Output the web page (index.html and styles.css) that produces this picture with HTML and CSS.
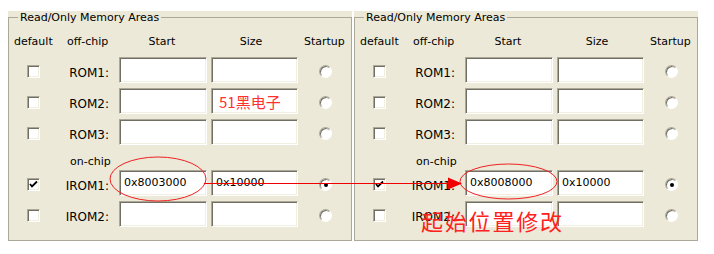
FILE: index.html
```html
<!DOCTYPE html>
<html>
<head>
<meta charset="utf-8">
<link rel="stylesheet" href="styles.css">
</head>
<body>
<div class="wrap">
  <div class="panel">
    <fieldset class="group">
      <legend>Read/Only Memory Areas</legend>
      <div class="grid">
        <div class="hd hd-default">default</div>
        <div class="hd hd-off">off-chip</div>
        <div class="hd hd-start">Start</div>
        <div class="hd hd-size">Size</div>
        <div class="hd hd-startup">Startup</div>

        <span class="chk"></span><div class="lbl">ROM1:</div><div class="field"></div><div class="field"></div><span class="radio"></span>
        <span class="chk"></span><div class="lbl">ROM2:</div><div class="field"></div><div class="field wm">51黑电子</div><span class="radio"></span>
        <span class="chk"></span><div class="lbl">ROM3:</div><div class="field"></div><div class="field"></div><span class="radio"></span>

        <div class="onchip">on-chip</div>

        <span class="chk on"><svg width="9" height="9" viewBox="0 0 9 9"><path d="M1 4 L3 6.5 L8 1.5" fill="none" stroke="#000" stroke-width="1.8"/></svg></span><div class="lbl">IROM1:</div><div class="field">0x8003000</div><div class="field">0x10000</div><span class="radio sel"></span>
        <span class="chk"></span><div class="lbl">IROM2:</div><div class="field"></div><div class="field"></div><span class="radio"></span>
      </div>
    </fieldset>
  </div>
  <div class="panel">
    <fieldset class="group">
      <legend>Read/Only Memory Areas</legend>
      <div class="grid">
        <div class="hd hd-default">default</div>
        <div class="hd hd-off">off-chip</div>
        <div class="hd hd-start">Start</div>
        <div class="hd hd-size">Size</div>
        <div class="hd hd-startup">Startup</div>

        <span class="chk"></span><div class="lbl">ROM1:</div><div class="field"></div><div class="field"></div><span class="radio"></span>
        <span class="chk"></span><div class="lbl">ROM2:</div><div class="field"></div><div class="field"></div><span class="radio"></span>
        <span class="chk"></span><div class="lbl">ROM3:</div><div class="field"></div><div class="field"></div><span class="radio"></span>

        <div class="onchip">on-chip</div>

        <span class="chk on"><svg width="9" height="9" viewBox="0 0 9 9"><path d="M1 4 L3 6.5 L8 1.5" fill="none" stroke="#000" stroke-width="1.8"/></svg></span><div class="lbl">IROM1:</div><div class="field">0x8008000</div><div class="field">0x10000</div><span class="radio sel"></span>
        <span class="chk"></span><div class="lbl">IROM2:</div><div class="field"></div><div class="field"></div><span class="radio"></span>
      </div>
    </fieldset>
  </div>
</div>

<svg class="marks" width="714" height="254" viewBox="0 0 714 254">
  <ellipse cx="158" cy="179" rx="48" ry="22" fill="none" stroke="#f02020" stroke-width="1"/>
  <ellipse cx="508.5" cy="181.5" rx="48.5" ry="17.5" fill="none" stroke="#f02020" stroke-width="1"/>
  <line x1="204" y1="183.5" x2="450" y2="183.5" stroke="#f00000" stroke-width="1"/>
  <polygon points="448,177.5 462,183.5 448,189.5" fill="#f00000"/>
</svg>
<div class="note">起始位置修改</div>
</body>
</html>
```
FILE: styles.css
```css
html, body {
  margin: 0;
  padding: 0;
  background: #ffffff;
}
body {
  font-family: "DejaVu Sans", "Liberation Sans", sans-serif;
  font-size: 11px;
  color: #000;
  position: relative;
  width: 714px;
  height: 254px;
  overflow: hidden;
}
.wrap {
  display: flex;
  gap: 2px;
  padding: 11px 0 0 8px;
}
.panel {
  width: 344px;
  height: 230px;
  background: #ece9d8;
}
.group {
  margin: 0;
  padding: 0;
  height: 100%;
  box-sizing: border-box;
  border: 1px solid #aca899;
  min-width: 0;
}
.group legend {
  margin-left: 9px;
  padding: 0 2px;
  line-height: 13px;
  font-size: 11px;
}
.grid {
  display: grid;
  grid-template-columns: 46px 56px 88px 87px 1fr;
  grid-template-rows: 28px 26px 26px 26px 15px 26px 26px;
  column-gap: 4px;
  row-gap: 5px;
}
.hd {
  align-self: end;
  line-height: 13px;
  padding-bottom: 4px;
  white-space: nowrap;
}
.hd-default { padding-left: 5px; }
.hd-off { padding-left: 8px; }
.hd-start { text-align: center; padding-right: 2px; }
.hd-size { text-align: center; padding-right: 7px; }
.hd-startup { padding-left: 2px; }

.lbl {
  text-align: right;
  padding-right: 6px;
  font-size: 12px;
  line-height: 14px;
  margin-top: 9px;
  white-space: nowrap;
}
.field {
  box-sizing: border-box;
  height: 26px;
  background: #fff;
  border-top: 1px solid #aca899;
  border-left: 1px solid #aca899;
  border-bottom: 1px solid #ffffff;
  border-right: 1px solid #ffffff;
  box-shadow: inset 1px 1px 0 #716f64, inset -1px -1px 0 #f1efe2;
  padding: 0 4px 0 4px;
  line-height: 24px;
  white-space: nowrap;
  overflow: hidden;
}
.field.wm {
  font-family: "Noto Sans CJK SC", sans-serif;
  font-size: 15px;
  color: #ff3030;
  padding-left: 7px;
  line-height: 26px;
}
.chk {
  justify-self: center;
  margin-left: 3px;
  margin-top: 8px;
  width: 13px;
  height: 13px;
  box-sizing: border-box;
  background: #fff;
  border-top: 1px solid #aca899;
  border-left: 1px solid #aca899;
  border-bottom: 1px solid #ffffff;
  border-right: 1px solid #ffffff;
  box-shadow: inset 1px 1px 0 #716f64, inset -1px -1px 0 #f1efe2;
  display: flex;
  align-items: center;
  justify-content: center;
}
.chk svg { display: block; }
.radio {
  justify-self: center;
  margin-right: 2px;
  margin-top: 8px;
  width: 13px;
  height: 13px;
  box-sizing: border-box;
  border-radius: 50%;
  background: #fff;
  border: 1px solid;
  border-color: #aca899 #ffffff #ffffff #aca899;
  box-shadow: inset 1px 1px 0 #716f64;
  display: flex;
  align-items: center;
  justify-content: center;
}
.radio.sel::after {
  content: "";
  width: 4px;
  height: 4px;
  border-radius: 50%;
  background: #000;
}
.onchip {
  grid-column: 2 / span 4;
  padding-left: 11px;
  line-height: 13px;
  align-self: end;
  margin-bottom: -3px;
}
.marks {
  position: absolute;
  left: 0;
  top: 0;
  pointer-events: none;
}
.note {
  position: absolute;
  left: 421px;
  top: 209px;
  font-family: "Noto Sans CJK SC", sans-serif;
  font-size: 22px;
  line-height: 22px;
  letter-spacing: 1.8px;
  color: #ff2020;
  white-space: nowrap;
}
```
